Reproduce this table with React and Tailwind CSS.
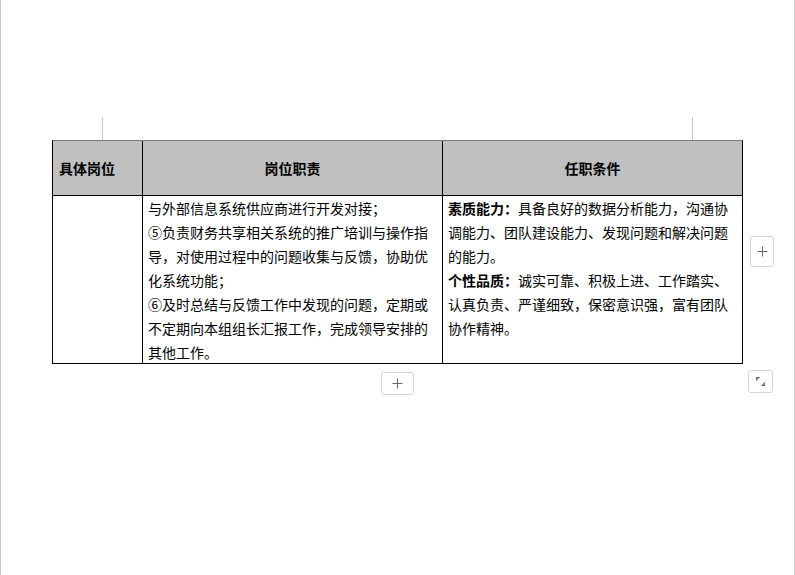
import React from 'react';

const duties = [
  '与外部信息系统供应商进行开发对接；',
  '⑤负责财务共享相关系统的推广培训与操作指',
  '导，对使用过程中的问题收集与反馈，协助优',
  '化系统功能；',
  '⑥及时总结与反馈工作中发现的问题，定期或',
  '不定期向本组组长汇报工作，完成领导安排的',
  '其他工作。',
];

const requirements = [
  [<b key="a">素质能力：</b>, '具备良好的数据分析能力，沟通协'],
  ['调能力、团队建设能力、发现问题和解决问题'],
  ['的能力。'],
  [<b key="b">个性品质：</b>, '诚实可靠、积极上进、工作踏实、'],
  ['认真负责、严谨细致，保密意识强，富有团队'],
  ['协作精神。'],
];

function PlusIcon() {
  return (
    <svg width="11" height="11" viewBox="0 0 11 11" className="text-[#666]">
      <path d="M5.5 0.5v10M0.5 5.5h10" stroke="currentColor" strokeWidth="1" />
    </svg>
  );
}

export default function App() {
  return (
    <div
      className="relative w-[795px] h-[575px] bg-white border-l border-r border-[#c8c8c8] overflow-hidden text-black"
      style={{ fontFamily: '"Noto Sans CJK SC", "Noto Sans", sans-serif' }}
    >
      {/* corner marks */}
      <div className="flex h-[23px] mt-[117px]">
        <div className="ml-[101px] w-px h-full bg-[#c8c8c8]" />
        <div className="ml-[589px] w-px h-full bg-[#c8c8c8]" />
      </div>

      <div className="ml-[51px] w-[691px] border border-black border-t-[#7a7a7a]">
        <div className="grid grid-cols-[90px_300px_299px] h-[55px] bg-[#c0c0c0] border-b border-black text-[14px] font-bold">
          <div className="flex items-center pl-[6px] border-r border-black">具体岗位</div>
          <div className="flex items-center justify-center border-r border-black">岗位职责</div>
          <div className="flex items-center justify-center">任职条件</div>
        </div>
        <div className="grid grid-cols-[90px_300px_299px] h-[167px] text-[14px] leading-[24px]">
          <div className="border-r border-black" />
          <div className="border-r border-black pl-[5px]">
            {duties.map((line, i) => (
              <div key={i} className="whitespace-nowrap">{line}</div>
            ))}
          </div>
          <div className="pl-[5px]">
            {requirements.map((line, i) => (
              <div key={i} className="whitespace-nowrap">{line}</div>
            ))}
          </div>
        </div>
      </div>

      {/* floating table controls */}
      <div className="absolute left-[749px] top-[236px] w-[24px] h-[31px] flex items-center justify-center rounded-[3px] border border-[#d4d4d4] bg-white">
        <PlusIcon />
      </div>
      <div className="absolute left-[380px] top-[372px] w-[33px] h-[23px] flex items-center justify-center rounded-[3px] border border-[#d4d4d4] bg-white">
        <PlusIcon />
      </div>
      <div className="absolute left-[747px] top-[370px] w-[25px] h-[23px] flex items-center justify-center rounded-[3px] border border-[#d4d4d4] bg-white">
        <svg width="9" height="9" viewBox="0 0 9 9">
          <path d="M0 0h3.5v1.5H1.5v2H0z" fill="#666" />
          <path d="M9 9H5.5V7.5h2v-2H9z" fill="#666" />
        </svg>
      </div>
    </div>
  );
}
